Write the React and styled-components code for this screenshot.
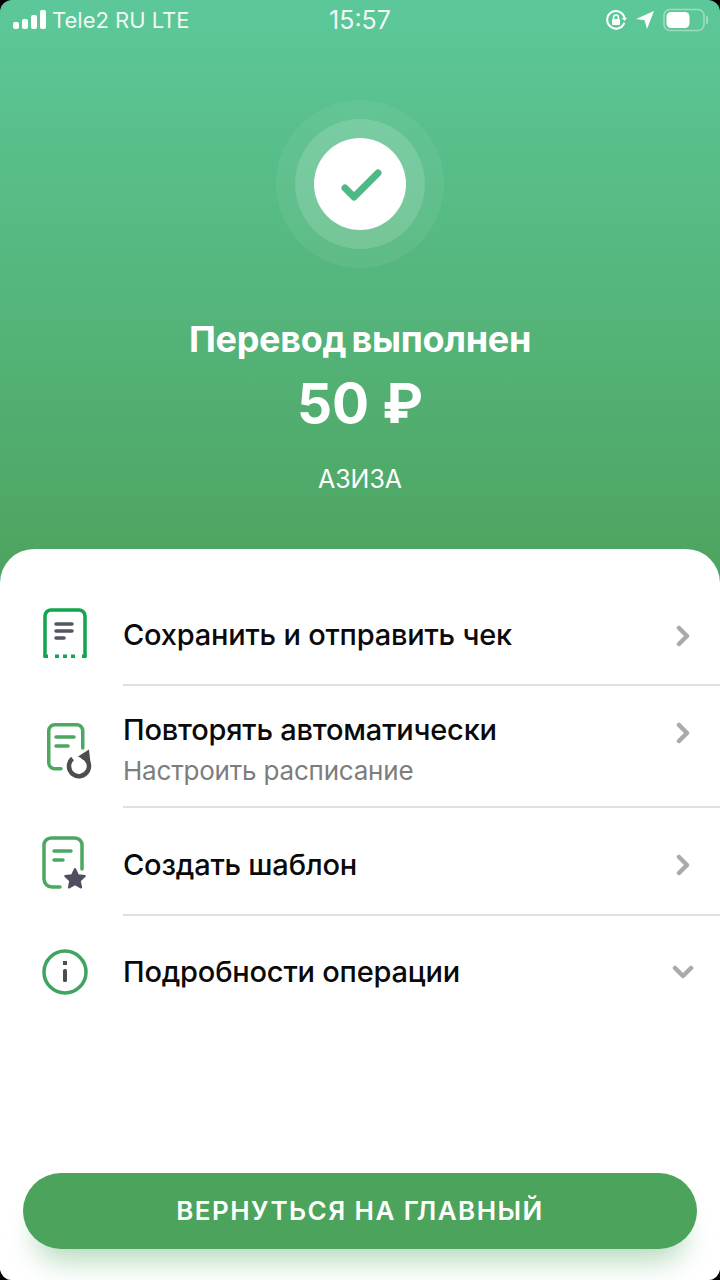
import React from "react";
import styled, { createGlobalStyle } from "styled-components";

const GlobalStyle = createGlobalStyle`
  html, body {
    margin: 0;
    padding: 0;
    background: #000;
  }
  * {
    box-sizing: border-box;
  }
`;

const Screen = styled.div`
  width: 720px;
  height: 1280px;
  border-radius: 12px;
  overflow: hidden;
  display: flex;
  flex-direction: column;
  font-family: Inter, "Noto Sans", sans-serif;
  background: linear-gradient(180deg, #5cc899 0%, #4da35e 46%);
`;

const StatusBar = styled.div`
  height: 40px;
  padding: 0 11px 0 13px;
  display: grid;
  grid-template-columns: 1fr auto 1fr;
  align-items: center;
  color: rgba(255, 255, 255, 0.92);
  font-size: 22px;
`;

const StatusLeft = styled.div`
  display: flex;
  align-items: center;
  gap: 6px;
`;

const StatusRight = styled.div`
  display: flex;
  align-items: center;
  justify-content: flex-end;
  gap: 9px;
`;

const Clock = styled.div`
  font-size: 25px;
  font-weight: 400;
  margin-left: -2px;
`;

const Hero = styled.div`
  height: 509px;
  padding-top: 60px;
  display: flex;
  flex-direction: column;
  align-items: center;
  color: #fff;
`;

const OuterRing = styled.div`
  width: 168px;
  height: 168px;
  border-radius: 50%;
  background: rgba(255, 255, 255, 0.06);
  display: flex;
  align-items: center;
  justify-content: center;
`;

const MiddleRing = styled.div`
  width: 130px;
  height: 130px;
  border-radius: 50%;
  background: rgba(255, 255, 255, 0.15);
  display: flex;
  align-items: center;
  justify-content: center;
`;

const CheckDisc = styled.div`
  width: 92px;
  height: 92px;
  border-radius: 50%;
  background: #fff;
  display: flex;
  align-items: center;
  justify-content: center;
`;

const Title = styled.div`
  margin-top: 50px;
  font-size: 36px;
  line-height: 42px;
  font-weight: 650;
  letter-spacing: -0.3px;
  word-spacing: -3px;
`;

const Amount = styled.div`
  margin-top: 9px;
  font-size: 55px;
  line-height: 68px;
  font-weight: 700;
`;

const Recipient = styled.div`
  margin-top: 27px;
  font-size: 25px;
  line-height: 30px;
  font-weight: 400;
`;

const Sheet = styled.div`
  flex: 1;
  background: #fff;
  border-radius: 34px 34px 0 0;
  padding-top: 36px;
  display: flex;
  flex-direction: column;
`;

const Row = styled.div`
  height: ${(p) => p.$height}px;
  display: flex;
  align-items: center;
`;

const IconSlot = styled.div`
  width: 123px;
  flex-shrink: 0;
  padding-left: ${(p) => p.$left}px;
  padding-top: ${(p) => p.$drop}px;
  padding-bottom: ${(p) => p.$lift}px;
  display: flex;
  align-items: center;
`;

const RowBody = styled.div`
  flex: 1;
  align-self: stretch;
  padding-right: 26px;
  padding-top: ${(p) => p.$top}px;
  display: flex;
  align-items: center;
  justify-content: space-between;
  border-bottom: ${(p) => (p.$last ? "none" : "2px solid #e0e0e0")};
`;

const RowText = styled.div`
  display: flex;
  flex-direction: column;
  gap: 8px;
`;

const RowTitle = styled.div`
  font-size: 29px;
  line-height: 36px;
  font-weight: 500;
  letter-spacing: -0.2px;
  color: #0a0a0a;
`;

const RowHint = styled.div`
  font-size: 26px;
  line-height: 30px;
  font-weight: 400;
  letter-spacing: -0.2px;
  color: #7d7d7d;
`;

const ChevronSlot = styled.div`
  display: flex;
  align-self: ${(p) => (p.$top ? "flex-start" : "center")};
  margin-top: ${(p) => (p.$top ? "30px" : p.$nudge ? "3px" : "0")};
`;

const BackButton = styled.button`
  margin: auto 23px 31px;
  height: 76px;
  padding-bottom: 2px;
  flex-shrink: 0;
  border: none;
  border-radius: 38px;
  background: #4ca35c;
  color: #fff;
  font-family: inherit;
  font-size: 26px;
  font-weight: 600;
  letter-spacing: 1.45px;
  box-shadow: 0 24px 28px -12px rgba(76, 163, 92, 0.4);
`;

const SignalIcon = () => (
  <svg width="33" height="20" viewBox="0 0 33 20" fill="#fff">
    <rect x="0" y="12" width="6" height="7" rx="2" />
    <rect x="9" y="9" width="6" height="10" rx="2" />
    <rect x="18" y="5" width="6" height="14" rx="2" />
    <rect x="27" y="0" width="6" height="19" rx="2" />
  </svg>
);

const RotationLockIcon = () => (
  <svg width="22" height="22" viewBox="0 0 22 22" fill="none">
    <path d="M19 14.5A8.8 8.8 0 1 1 19.6 9" stroke="#fff" strokeWidth="2" strokeLinecap="round" />
    <path d="M17 9h5l-2.5 3z" fill="#fff" />
    <rect x="7" y="10" width="8" height="6" rx="1" fill="#fff" />
    <path d="M8.6 10V8.4a2.4 2.4 0 0 1 4.8 0V10" stroke="#fff" strokeWidth="1.5" />
  </svg>
);

const LocationIcon = () => (
  <svg width="18" height="18" viewBox="0 0 18 18" fill="#fff">
    <path d="M18 0 0 8l8.6 1.3L11 18z" />
  </svg>
);

const BatteryIcon = () => (
  <svg width="46" height="24" viewBox="0 0 46 24" fill="none">
    <rect x="1" y="1.5" width="40" height="21" rx="6" stroke="#fff" strokeOpacity="0.4" strokeWidth="1.6" />
    <rect x="3.5" y="4" width="23" height="16" rx="4.5" fill="#fff" />
    <path d="M44 9v6" stroke="#fff" strokeOpacity="0.4" strokeWidth="2" strokeLinecap="round" />
  </svg>
);

const CheckIcon = () => (
  <svg width="44" height="36" viewBox="0 0 44 36" fill="none">
    <path d="M7 22l9 9L40 7" stroke="#4fb985" strokeWidth="7" strokeLinecap="round" strokeLinejoin="round" />
  </svg>
);

const ReceiptIcon = () => (
  <svg width="44" height="50" viewBox="0 0 44 50" fill="none">
    <path d="M2 49V8a6 6 0 0 1 6-6h28a6 6 0 0 1 6 6v41" stroke="#12a54f" strokeWidth="3.5" />
    <path d="M0.5 48.3h4.5M12 48.3h4M20 48.3h4M28 48.3h4M39 48.3h4.5" stroke="#12a54f" strokeWidth="3.5" />
    <path d="M13 16h16M13 23h16M13 30h8" stroke="#545465" strokeWidth="3.5" strokeLinecap="round" />
  </svg>
);

const RepeatIcon = () => (
  <svg width="48" height="58" viewBox="0 0 48 58" fill="none">
    <path d="M16 47.75H9.75a6 6 0 0 1-6-6V9.75a6 6 0 0 1 6-6h22a6 6 0 0 1 6 6V27" stroke="#4ca860" strokeWidth="3.5" strokeLinecap="round" />
    <path d="M11 16h18M11 25h12" stroke="#4ca860" strokeWidth="3.5" strokeLinecap="round" />
    <path d="M27.5 37.5A10 10 0 1 0 37 35.6" stroke="#4d4d4d" strokeWidth="4.5" />
    <path d="M44 28.5l1.500 13.500L33 35.500z" fill="#4d4d4d" />
  </svg>
);

const StarDocIcon = () => (
  <svg width="46" height="54" viewBox="0 0 46 54" fill="none">
    <path d="M18 51H10a8 8 0 0 1-8-8V9a7 7 0 0 1 7-7h24a7 7 0 0 1 7 7v24" stroke="#4ca860" strokeWidth="3.5" strokeLinecap="round" />
    <path d="M12 15h17M12 24h9" stroke="#4ca860" strokeWidth="3.5" strokeLinecap="round" />
    <path
      d="M33 33l3 6.200 6.800.9-5 4.700 1.300 6.700-6.100-3.300-6.100 3.300 1.300-6.700-5-4.700 6.800-.9z"
      fill="#4f4f60"
      stroke="#4f4f60"
      strokeWidth="2"
      strokeLinejoin="round"
    />
  </svg>
);

const InfoIcon = () => (
  <svg width="46" height="46" viewBox="0 0 46 46" fill="none">
    <circle cx="23" cy="23" r="21" stroke="#3fa45f" strokeWidth="3.5" />
    <rect x="21" y="12" width="4" height="4" fill="#4d4d4d" />
    <rect x="21" y="20" width="4" height="13" rx="1.5" fill="#4d4d4d" />
  </svg>
);

const Chevron = ({ down }) => (
  <svg width="22" height="22" viewBox="0 0 22 22" fill="none">
    <path
      d={down ? "M3 7l8 8 8-8" : "M7 3l8 8-8 8"}
      stroke="#aaaaaa"
      strokeWidth="4.5"
      strokeLinecap="round"
      strokeLinejoin="round"
    />
  </svg>
);

const rows = [
  { id: "receipt", height: 101, left: 43, lift: 6, drop: 0, top: 0, icon: <ReceiptIcon />, title: "Сохранить и отправить чек" },
  { id: "repeat", height: 122, left: 45, lift: 0, drop: 6, top: 6, icon: <RepeatIcon />, title: "Повторять автоматически", hint: "Настроить расписание", chevronTop: true },
  { id: "template", height: 108, left: 42, lift: 0, drop: 2, top: 8, icon: <StarDocIcon />, title: "Создать шаблон" },
  { id: "details", height: 112, left: 42, lift: 0, drop: 0, top: 0, icon: <InfoIcon />, title: "Подробности операции", last: true },
];

const App = () => (
  <>
    <GlobalStyle />
    <Screen>
      <StatusBar>
        <StatusLeft>
          <SignalIcon />
          <span>Tele2 RU LTE</span>
        </StatusLeft>
        <Clock>15:57</Clock>
        <StatusRight>
          <RotationLockIcon />
          <LocationIcon />
          <BatteryIcon />
        </StatusRight>
      </StatusBar>
      <Hero>
        <OuterRing>
          <MiddleRing>
            <CheckDisc>
              <CheckIcon />
            </CheckDisc>
          </MiddleRing>
        </OuterRing>
        <Title>Перевод выполнен</Title>
        <Amount>50 ₽</Amount>
        <Recipient>АЗИЗА</Recipient>
      </Hero>
      <Sheet>
        {rows.map((row) => (
          <Row key={row.id} $height={row.height}>
            <IconSlot $left={row.left} $lift={row.lift} $drop={row.drop}>{row.icon}</IconSlot>
            <RowBody $last={row.last} $top={row.top}>
              <RowText>
                <RowTitle>{row.title}</RowTitle>
                {row.hint && <RowHint>{row.hint}</RowHint>}
              </RowText>
              <ChevronSlot $top={row.chevronTop} $nudge={row.id === "receipt"}>
                <Chevron down={row.last} />
              </ChevronSlot>
            </RowBody>
          </Row>
        ))}
        <BackButton>ВЕРНУТЬСЯ НА ГЛАВНЫЙ</BackButton>
      </Sheet>
    </Screen>
  </>
);

export default App;
